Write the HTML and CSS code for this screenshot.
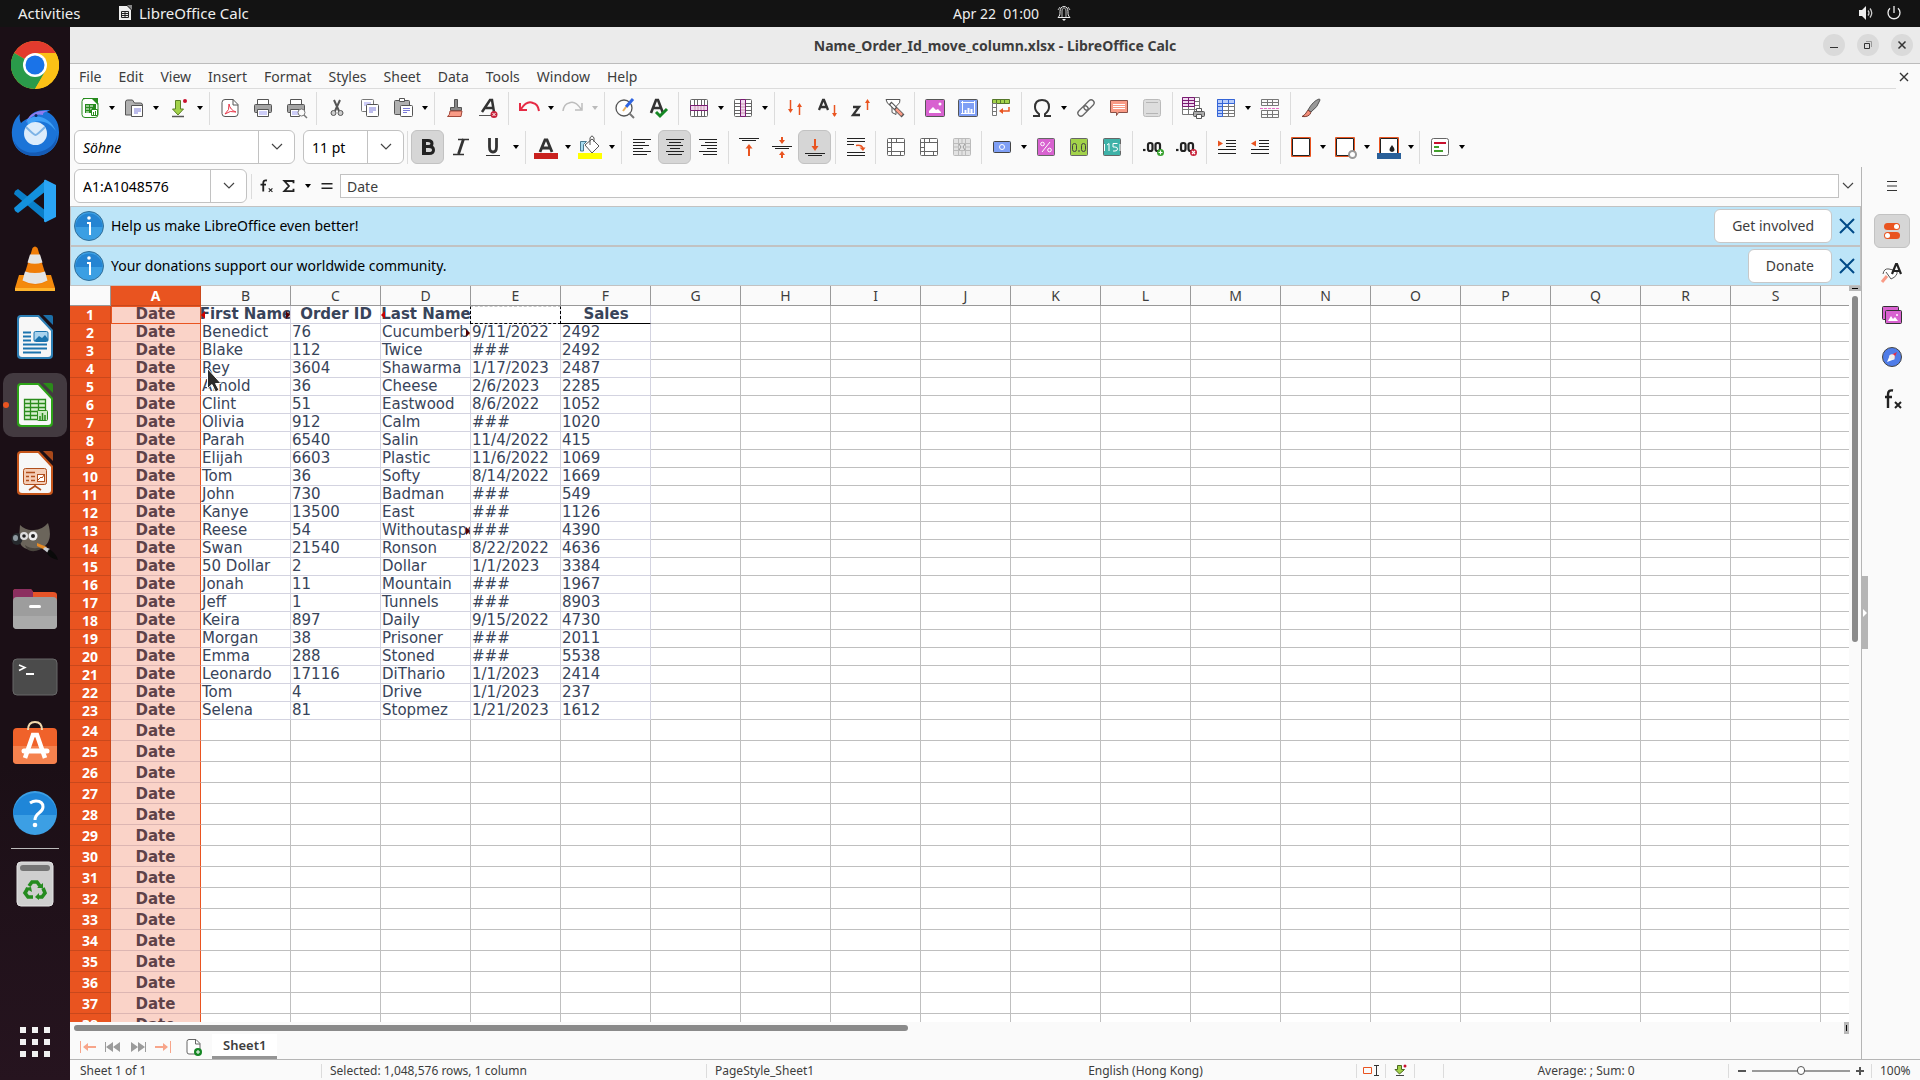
FILE: index.html
```html
<!DOCTYPE html>
<html lang="en">
<head>
    <meta charset="UTF-8">
    <meta name="viewport" content="width=device-width, initial-scale=1.0">
    <title>Name_Order_Id_move_column.xlsx - LibreOffice Calc</title>
    <link rel="stylesheet" href="styles.css">
</head>
<body>
    <header class="topbar">
        <div class="topbar-left">
            <span class="activities">Activities</span>
            <svg width="14" height="16" viewBox="0 0 14 16"><path d="M1 1h8l4 4v10H1z" fill="#eee"/><path d="M9 0h5v5z" fill="#888"/><path d="M3.500 6.500h7v6h-7zM3.500 8.500h7M3.500 10.500h7M7 6.500v6" fill="none" stroke="#222"/></svg>
            <span>LibreOffice Calc</span>
        </div>
        <div class="topbar-clock">
            <span>Apr 22&nbsp; 01:00</span>
            <svg width="14" height="16" viewBox="0 0 14 16" fill="none" stroke="#eee"><path d="M1 12.500h12c-2-2-2-3-2-6 0-3-1.500-5-4-5s-4 2-4 5c0 3 0 4-2 6z"/><path d="M5 12V6c0-2 1-3 2-3s2 1 2 3v6M1 5l2-3M13 5l-2-3" stroke-width=".8"/><path d="M5 14h4l-2 2z" fill="#eee" stroke="none"/></svg>
        </div>
        <div class="topbar-right">
            <svg width="16" height="16" viewBox="0 0 16 16"><path d="M1 5h3l4-4v14l-4-4H1z" fill="#eee"/><path d="M10 5.500q2 2.500 0 5M12 3.500q3.500 4.500 0 9" fill="none" stroke="#ccc" stroke-width="1.300"/></svg>
            <svg width="16" height="16" viewBox="0 0 16 16" fill="none" stroke="#eee" stroke-width="1.300"><path d="M4 3.300a6 6 0 1 0 8 0M8 1v7"/></svg>
        </div>
    </header>

    <div class="desktop">
        <!-- Dock -->
        <nav class="dock">
            <button class="dock-item" aria-label="Google Chrome">
                <svg width="48" height="48" viewBox="0 0 48 48"><circle cx="24" cy="24" r="24" fill="#fbc116"/><path d="M24 24L3.200 12A24 24 0 0 1 44.800 12H24z" fill="#e33b2e"/><path d="M24 24L3.200 12A24 24 0 0 0 24 48L34.500 30z" fill="#2a9b4a"/><path d="M24 12h20.800A24 24 0 0 1 24 48L34.500 30z" fill="#fbc116"/><circle cx="24" cy="24" r="12" fill="#fff"/><circle cx="24" cy="24" r="9.500" fill="#1a73e8"/></svg>
            </button>
            <button class="dock-item" aria-label="Thunderbird">
                <svg width="48" height="48" viewBox="0 0 48 48"><path d="M1 27C0 17 4 9 9 5c-1 4 0 7 1 9 2-2 5-4 8-5C21 3 28 0 40 1.500c-2 0-3 .5-4 1.500 7 3 12 10 12 20 0 14-10 24-24 24S2 38 1 27z" fill="#1b74d8"/><path d="M3 32C8 42 18 45 27 43 37 42 45 34 46 26c1 12-9 21-22 21C13 47 5 41 3 32z" fill="#155bb5"/><path d="M15 14c2-8 10-13 22-12-4 1-5 2-5 4-6-2-13 1-17 8z" fill="#8d7cf0"/><path d="M16 11c9-8 24-2 29 11-5-6-8-8-12-9-7-2-11 0-16 4z" fill="#3fa0f7"/><circle cx="24.500" cy="24.500" r="11.500" fill="#dcecfb"/><path d="M15 18q8 8 9.500 8t9.500-8" fill="none" stroke="#7db3e6" stroke-width="2"/><circle cx="25" cy="6.500" r="1.500" fill="#0c2a60"/></svg>
            </button>
            <button class="dock-item" aria-label="Visual Studio Code">
                <svg width="44" height="44" viewBox="0 0 44 44"><path d="M2 12l3-2 28 22v10L1 15z" fill="#0a7fc9"/><path d="M2 32l3 2 28-22V1L1 29z" fill="#1391dd"/><path d="M33 1l10 5v32l-10 5c-1 .5-2 0-2-1V2c0-1 1-1.500 2-1z" fill="#2aa5f5"/></svg>
            </button>
            <button class="dock-item" aria-label="VLC media player">
                <svg width="42" height="46" viewBox="0 0 42 46"><path d="M5 29h32l4 13v3H1v-3z" fill="#f48a0c"/><path d="M1 42h40v3H1z" fill="#ffb52e"/><path d="M18.500 2q2.500-3 5 0l10 33q-12 8-25 0z" fill="#f07d08"/><path d="M16 8.500h10l2.500 8q-8 2.500-15 0zM11 25.500q10 3 20 0l2.500 9q-12 7-25 0z" fill="#e4e4e4"/></svg>
            </button>
            <button class="dock-item" aria-label="LibreOffice Writer">
                <svg width="38" height="46" viewBox="0 0 38 46"><path d="M5 1h18l14 15v25q0 4-4 4H5q-4 0-4-4V5q0-4 4-4z" fill="#2d7fb5"/><path d="M5 3h17l13 14v23q0 3-3 3H6q-3 0-3-3V6q0-3 2-3z" fill="#f7f7f7"/><path d="M27 1h8q2 0 2 2v8z" fill="#1c6fa8"/><path d="M7 18.500h8M7 22.500h8M7 26.500h8M7 30.500h24M7 34.500h24M7 38.500h18" stroke="#1c74ae" stroke-width="2"/><rect x="18" y="17.500" width="14" height="10" rx="1.500" fill="#a9d3ee" stroke="#1c74ae"/><path d="M18 27l5-5 3 2 3-3 3 4v2z" fill="#1c74ae"/></svg>
            </button>
            <button class="dock-item dock-active" aria-label="LibreOffice Calc">
                <svg width="38" height="46" viewBox="0 0 38 46"><path d="M5 1h18l14 15v25q0 4-4 4H5q-4 0-4-4V5q0-4 4-4z" fill="#2da318"/><path d="M5 3h17l13 14v23q0 3-3 3H6q-3 0-3-3V6q0-3 2-3z" fill="#f7f7f7"/><path d="M27 1h8q2 0 2 2v8z" fill="#2b8a1a"/><path d="M8.500 17.500h21v20h-21z" fill="#d8f0d0"/><path d="M8.500 17.500h21v20h-21zM8.500 21.500h21M8.500 25.500h21M8.500 29.500h21M8.500 33.500h21M14.500 17.500v20M22.500 17.500v20" fill="none" stroke="#2a8c1c" stroke-width="1.300"/><rect x="21.500" y="28.500" width="10" height="10" rx="1" fill="#cdeac4" stroke="#2a8c1c"/><path d="M24 38v-4M26.500 38v-7M29 38v-5" stroke="#2a8c1c" stroke-width="1.500"/></svg>
            </button>
            <button class="dock-item" aria-label="LibreOffice Impress">
                <svg width="38" height="46" viewBox="0 0 38 46"><path d="M5 1h18l14 15v25q0 4-4 4H5q-4 0-4-4V5q0-4 4-4z" fill="#c5551a"/><path d="M5 3h17l13 14v23q0 3-3 3H6q-3 0-3-3V6q0-3 2-3z" fill="#f7f7f7"/><path d="M27 1h8q2 0 2 2v8z" fill="#a8481a"/><rect x="7.500" y="18.500" width="23" height="16" rx="2" fill="#f4cdb6" stroke="#b04e1c"/><path d="M10 22.500h9M10 26.500h3M10 30.500h3M15 26.500h4M15 30.500h4M19 35v2M19 36l-6 4M19 36l6 4" stroke="#b04e1c" stroke-width="1.600"/><rect x="21.500" y="24.500" width="7" height="7" fill="#fff" stroke="#b04e1c"/><path d="M22 30l3-3 1 1 2-3" fill="none" stroke="#b04e1c"/></svg>
            </button>
            <button class="dock-item" aria-label="GIMP">
                <svg width="48" height="42" viewBox="0 0 48 42"><path d="M9 5q6 6 14 5 8 0 14-7 5 16-3 23-8 6-18 3-7-2-8-10z" fill="#6b655b"/><path d="M14 25q8 6 20 1-6 6-14 5-5-1-6-6z" fill="#4a453e"/><ellipse cx="6" cy="19" rx="5.500" ry="6" fill="#26292d"/><ellipse cx="4.500" cy="18" rx="2.500" ry="3" fill="#8d98a0"/><circle cx="13" cy="16" r="4" fill="#ddd"/><circle cx="13" cy="16" r="1.800" fill="#222"/><circle cx="22" cy="16" r="4.500" fill="#eee"/><circle cx="22" cy="16" r="2" fill="#222"/><path d="M26 23l10 4-2 3-8-4z" fill="#e58a26"/><path d="M34 27l5 2-2 4-5-4z" fill="#c9ccd0"/><path d="M38 29q7 4 9 11-9-2-11-7z" fill="#0a0a0a"/></svg>
            </button>
            <button class="dock-item" aria-label="Files">
                <svg width="46" height="42" viewBox="0 0 46 42"><path d="M1 4q0-3 3-3h14q2 0 3 3h20q4 0 4 3v9H1z" fill="#e65428"/><path d="M1 4q0-3 3-3h14q2 0 3 3v12H1z" fill="#8c2f60"/><rect x="1" y="9" width="44" height="32" rx="4" fill="#9d9d9d"/><path d="M1 28h44v9q0 4-4 4H5q-4 0-4-4z" fill="#aaa"/><rect x="17" y="17" width="12" height="3" rx="1.500" fill="#fff"/></svg>
            </button>
            <button class="dock-item" aria-label="Terminal">
                <svg width="46" height="38" viewBox="0 0 46 38"><rect x="1" y="1" width="44" height="36" rx="4" fill="#4b4b4b" stroke="#686868"/><path d="M7 7l6 2.500-6 3" fill="none" stroke="#fff" stroke-width="1.500"/><path d="M14 16h8" stroke="#fff" stroke-width="2"/></svg>
            </button>
            <button class="dock-item" aria-label="Ubuntu Software">
                <svg width="46" height="48" viewBox="0 0 46 48"><rect x="1" y="7" width="44" height="36" rx="4" fill="#f0622a"/><path d="M1 25h44v14q0 4-4 4H5q-4 0-4-4z" fill="#f5824e"/><path d="M16 9q0-8 7-8t7 8" fill="none" stroke="#f3d9ae" stroke-width="2"/><path d="M13 37l8-23h4l8 23" fill="none" stroke="#fff" stroke-width="4.500"/><path d="M12 30h23" stroke="#fff" stroke-width="5" stroke-linecap="round"/></svg>
            </button>
            <button class="dock-item" aria-label="Help">
                <svg width="46" height="46" viewBox="0 0 46 46"><circle cx="23" cy="23" r="22" fill="#3c9fe4"/><path d="M1 25a22 22 0 1 1 44 0z" fill="#1f86d8"/><path d="M18 13q3-2 6-2 7 0 7 6 0 3-4 6-4 3-4 7" fill="none" stroke="#fff" stroke-width="3"/><circle cx="23" cy="35" r="2.300" fill="#fff"/></svg>
            </button>
            <div class="dock-line"></div>
            <button class="dock-item" aria-label="Trash">
                <svg width="38" height="46" viewBox="0 0 38 46"><rect x="1" y="1" width="36" height="44" rx="4" fill="#cfcfcf" stroke="#e4e4e4"/><rect x="4" y="4" width="30" height="6" rx="3" fill="#757575"/><path d="M13 25l3-4h5l3 4M27 27l2 5-3 4h-4M17 36h-5l-3-4 3-5" fill="none" stroke="#258b1f" stroke-width="3.600"/><path d="M21 27h6v-5zM23 32v7l-4-3zM9 27l6-1 1 5z" fill="#258b1f"/></svg>
            </button>
            <button class="dock-apps" aria-label="Show Applications">
                <svg width="30" height="30" viewBox="0 0 30 30" fill="#f2f2f2"><path d="M0 0h6v6H0zM12 0h6v6h-6zM24 0h6v6h-6zM0 12h6v6H0zM12 12h6v6h-6zM24 12h6v6h-6zM0 24h6v6H0zM12 24h6v6h-6zM24 24h6v6h-6z"/></svg>
            </button>
        </nav>

        <main class="window">
            <div class="titlebar">
                <h1 class="title">Name_Order_Id_move_column.xlsx - LibreOffice Calc</h1>
                <div class="window-buttons">
                    <button aria-label="Minimize"><svg width="10" height="10" viewBox="0 0 10 10"><path d="M1 7.500h8" stroke="#333"/></svg></button>
                    <button aria-label="Restore"><svg width="10" height="10" viewBox="0 0 10 10" fill="none" stroke="#333"><path d="M1.500 3.500h5v5h-5z"/><path d="M3 1.500h5.500V7" stroke="#999"/></svg></button>
                    <button aria-label="Close"><svg width="10" height="10" viewBox="0 0 10 10"><path d="M1.500 1.500l7 7M8.500 1.500l-7 7" stroke="#333" stroke-width="1.500"/></svg></button>
                </div>
            </div>

            <div class="menubar">
                <div class="menus">
                    <button>File</button><button>Edit</button><button>View</button><button>Insert</button><button>Format</button><button>Styles</button><button>Sheet</button><button>Data</button><button>Tools</button><button>Window</button><button>Help</button>
                </div>
                <button class="close-doc" aria-label="Close document"><svg width="10" height="10" viewBox="0 0 10 10"><path d="M1 1l8 8M9 1l-8 8" stroke="#333" stroke-width="1.400"/></svg></button>
            </div>

            <!-- Standard toolbar -->
            <div class="toolbar toolbar-standard">
                <button class="tool" aria-label="New"><svg viewBox="0 0 24 24"><path d="M5 2.500h10l5 5v11q0 3-3 3H7q-3 0-3-3v-13q0-3 3-3z" fill="#fff" stroke="#268b1d"/><path d="M13 2h7v7z" fill="#268b1d"/><path d="M7 8h11v9H7z" fill="#268b1d"/><path d="M8 10h3M12 10h3M8 13h3M12 13h2M8 16h3" stroke="#fff"/><path d="M13.500 13.500h6v6h-6z" fill="#fff" stroke="#268b1d"/><path d="M15.500 19v-3M17.500 19v-4" stroke="#268b1d"/></svg></button><button class="drop" aria-label="New options"></button>
                <button class="tool" aria-label="Open"><svg viewBox="0 0 24 24"><path d="M3.500 19V6q0-2 2-2h5l2 3h6q2 0 2 2v10z" fill="#b0b0b0" stroke="#555"/><path d="M9.500 9.500h11v11h-11z" fill="#fff" stroke="#555"/><path d="M12 13h7M12 15h7M12 17h4" stroke="#7a7ad8"/></svg></button><button class="drop" aria-label="Open options"></button>
                <button class="tool" aria-label="Save"><svg viewBox="0 0 24 24"><path d="M9.500 4.500h5V13h3l-5.500 6L6.500 13h3z" fill="#a2d24a" stroke="#5b7f24"/><path d="M6 20.500h12" stroke="#555" stroke-width="1.500"/><circle cx="19" cy="5" r="2" fill="#c8102e"/></svg></button><button class="drop" aria-label="Save options"></button>
                <i class="sep"></i>
                <button class="tool" aria-label="Export as PDF"><svg viewBox="0 0 24 24"><path d="M7 3.500h8l5 5v9q0 3-3 3H7q-3 0-3-3v-11q0-3 3-3z" fill="#fff" stroke="#555"/><path d="M15 3v6h5" fill="none" stroke="#555"/><path d="M11 8q1 6 7 8-6-2-11 2 5-4 4-10z" fill="none" stroke="#e8374a"/></svg></button>
                <button class="tool" aria-label="Print"><svg viewBox="0 0 24 24"><path d="M6.500 3.500h11v5h-11z" fill="#fff" stroke="#555"/><rect x="3.500" y="8.500" width="17" height="8" rx="1" fill="#a5a5a5" stroke="#555"/><path d="M6.500 13.500h11v7h-11z" fill="#fff" stroke="#555"/><path d="M8 16h8M8 18h8" stroke="#9c9cf0"/></svg></button>
                <button class="tool" aria-label="Print preview"><svg viewBox="0 0 24 24"><path d="M6.500 3.500h11v5h-11z" fill="#fff" stroke="#555"/><rect x="3.500" y="8.500" width="17" height="8" rx="1" fill="#a5a5a5" stroke="#555"/><path d="M6.500 13.500h9v7h-9z" fill="#fff" stroke="#555"/><path d="M8 16h6M8 18h6" stroke="#9c9cf0"/><circle cx="17.500" cy="16.500" r="3.500" fill="#fafafa" stroke="#777"/><path d="M20 19l3 3" stroke="#777" stroke-width="1.500"/></svg></button>
                <i class="sep"></i>
                <button class="tool" aria-label="Cut"><svg viewBox="0 0 24 24" fill="none" stroke="#555"><path d="M9 4l5 11M15 4l-5 11" stroke-width="2"/><circle cx="8.500" cy="17" r="2.500" fill="#ccc"/><circle cx="15.500" cy="17" r="2.500" fill="#ccc"/></svg></button>
                <button class="tool" aria-label="Copy"><svg viewBox="0 0 24 24" fill="#fff" stroke="#777"><rect x="3.500" y="3.500" width="12" height="12" rx="1"/><path d="M6 7h7M6 9h7" stroke="#9c9cf0"/><rect x="8.500" y="8.500" width="12" height="12" rx="1" stroke="#555"/><path d="M11 12h7M11 14h7M11 16h4" stroke="#7a7ad8"/></svg></button>
                <button class="tool" aria-label="Paste"><svg viewBox="0 0 24 24"><rect x="3.500" y="4.500" width="15" height="14" rx="1" fill="#b0b0b0" stroke="#555"/><path d="M8.500 2.500h5v3h-5z" fill="#fff" stroke="#555"/><rect x="9.500" y="9.500" width="12" height="11" rx="1" fill="#fff" stroke="#555"/><path d="M12 12.500h7M12 14.500h7M12 16.500h4" stroke="#7a7ad8"/></svg></button><button class="drop" aria-label="Paste options"></button>
                <i class="sep"></i>
                <button class="tool" aria-label="Clone formatting"><svg viewBox="0 0 24 24"><path d="M11.500 3.500h3v8h4v3h-11v-3h4z" fill="#888" stroke="#555"/><path d="M7 15h12l-1 5.500H4.500Q7 19 7 15z" fill="#f99b86" stroke="#a3483a"/></svg></button>
                <button class="tool" aria-label="Clear formatting"><svg viewBox="0 0 24 24"><path d="M6 16l8-12h2l2 12M9 12h8" fill="none" stroke="#333" stroke-width="2.500"/><path d="M3 19.500h12" stroke="#555"/><circle cx="18" cy="18.500" r="3.500" fill="#c8243c"/><path d="M16.500 17l3 3M19.500 17l-3 3" stroke="#fff"/></svg></button>
                <i class="sep"></i>
                <button class="tool" aria-label="Undo"><svg viewBox="0 0 24 24" fill="none" stroke="#e62a44" stroke-width="2"><path d="M3 7v7h7M4 13q6-9 12-6 5 1 6 8"/></svg></button><button class="drop" aria-label="Undo list"></button>
                <button class="tool" aria-label="Redo"><svg viewBox="0 0 24 24" fill="none" stroke="#bdbdbd" stroke-width="1.500"><path d="M21 7v7h-7M20 13q-6-9-12-6-5 1-6 8"/></svg></button><button class="drop drop-off" aria-label="Redo list"></button>
                <i class="sep"></i>
                <button class="tool" aria-label="Find and replace"><svg viewBox="0 0 24 24"><circle cx="11" cy="12" r="8" fill="#fff" stroke="#555" stroke-width="1.300"/><path d="M16 17l5 5" stroke="#777" stroke-width="2"/><path d="M13 11l7-8" stroke="#2f64e0" stroke-width="3"/><path d="M10 15l3-4" stroke="#e8b060" stroke-width="2"/></svg></button>
                <button class="tool" aria-label="Spelling"><svg viewBox="0 0 24 24" fill="none"><path d="M5 17l5-13h2l5 13M7 12h8" stroke="#333" stroke-width="2.600"/><path d="M10 16l4 4 7-7" stroke="#158724" stroke-width="3"/></svg></button>
                <i class="sep"></i>
                <button class="tool" aria-label="Row"><svg viewBox="0 0 24 24" fill="none" stroke="#666"><rect x="3.500" y="3.500" width="17" height="17" rx="1" fill="#fff"/><path d="M7.500 4v16M10.500 4v16M14.500 4v16M17.500 4v16"/><path d="M3.500 9.500h17v5h-17z" fill="#f0d8f0" stroke="#7a1b72"/><path d="M8 10v4M11 10v4M14 10v4M17 10v4" stroke="#c9a"/></svg></button><button class="drop" aria-label="Row options"></button>
                <button class="tool" aria-label="Column"><svg viewBox="0 0 24 24" fill="none" stroke="#666"><rect x="3.500" y="3.500" width="17" height="17" rx="1" fill="#fff"/><path d="M4 7.500h16M4 10.500h16M4 14.500h16M4 17.500h16"/><path d="M9.500 3.500h5v17h-5z" fill="#f0d8f0" stroke="#7a1b72"/><path d="M10 8h4M10 11h4M10 14h4M10 17h4" stroke="#c9a"/></svg></button><button class="drop" aria-label="Column options"></button>
                <i class="sep"></i>
                <button class="tool" aria-label="Sort"><svg viewBox="0 0 24 24" fill="none" stroke="#e95420"><path d="M7.500 4v11M16.500 9v10" stroke-width="1.500"/><path d="M5 13l2.500 4 2.500-4zM14 11l2.500-4 2.500 4z" fill="#e95420" stroke="none"/></svg></button>
                <button class="tool" aria-label="Sort ascending"><svg viewBox="0 0 24 24" fill="none"><path d="M3 14L7 4h1l4 10M4 11h7" stroke="#333" stroke-width="2.300"/><path d="M18.500 9v11" stroke="#e95420" stroke-width="1.500"/><path d="M16 17l2.500 4 2.500-4z" fill="#e95420"/></svg></button>
                <button class="tool" aria-label="Sort descending"><svg viewBox="0 0 24 24" fill="none"><path d="M4 11h6l-6 8h7" stroke="#333" stroke-width="2.300"/><path d="M18.500 5v9" stroke="#e95420" stroke-width="1.500"/><path d="M16 7l2.500-4 2.500 4z" fill="#e95420"/></svg></button>
                <button class="tool" aria-label="AutoFilter"><svg viewBox="0 0 24 24"><path d="M4 3.500h14q1 3-4 7v8l-4-2v-6q-6-3-6-7z" fill="#fff" stroke="#555"/><path d="M8 7l13 13" stroke="#555" stroke-width="4"/><path d="M9 8l4 4" stroke="#fff" stroke-width="2"/><path d="M14 13l6 6" stroke="#f99b86" stroke-width="2.500"/></svg></button>
                <i class="sep"></i>
                <button class="tool" aria-label="Insert image"><svg viewBox="0 0 24 24"><rect x="2.500" y="3.500" width="19" height="17" rx="1" fill="#d862d0" stroke="#555"/><path d="M6 17v-2l4-4 3 3 2-1 3 3v1z" fill="#fff"/><circle cx="17" cy="8" r="1.500" fill="#fff"/></svg></button>
                <button class="tool" aria-label="Insert chart"><svg viewBox="0 0 24 24"><rect x="2.500" y="3.500" width="19" height="17" rx="1" fill="#7f9ff5" stroke="#555"/><path d="M6.500 5v13M5 17.500h14M5 6.500h14M18.500 5v13" stroke="#fff"/><path d="M9.500 17v-3M12.500 17v-5M15.500 17v-4" stroke="#fff" stroke-width="2"/></svg></button>
                <button class="tool" aria-label="Pivot table"><svg viewBox="0 0 24 24"><path d="M3.500 3.500h17v4h-17z" fill="#a2d24a" stroke="#55762a"/><path d="M7.500 4v3M11.500 4v3M15.500 4v3" stroke="#55762a"/><path d="M3.500 7.500h4v12h-4zM4 11.500h3M4 15.500h3" fill="#fff" stroke="#777"/><path d="M20 11v4h-7" fill="none" stroke="#e95420" stroke-width="1.500"/><path d="M14 12l-4 3 4 3z" fill="#e95420"/></svg></button>
                <i class="sep"></i>
                <button class="tool" aria-label="Special character"><svg viewBox="0 0 24 24"><path d="M3 20h6v-2q-4-3-4-7 0-7 7-7t7 7q0 4-4 7v2h6" fill="none" stroke="#333" stroke-width="2"/></svg></button><button class="drop" aria-label="Character list"></button>
                <button class="tool" aria-label="Hyperlink"><svg viewBox="0 0 24 24" fill="none" stroke="#666" stroke-width="1.300"><rect x="3" y="12" width="12" height="6" rx="3" transform="rotate(-45 9 15)"/><rect x="9" y="6" width="12" height="6" rx="3" transform="rotate(-45 15 9)"/></svg></button>
                <button class="tool" aria-label="Comment"><svg viewBox="0 0 24 24"><path d="M3.500 4.500h17v12h-9l-2 3v-3h-6z" fill="#f99b86" stroke="#8a5046"/><path d="M6 8.500h12M6 10.500h12M6 12.500h12" stroke="#fff"/></svg></button>
                <button class="tool" aria-label="Headers and footers"><svg viewBox="0 0 24 24"><rect x="3.500" y="3.500" width="17" height="17" rx="2" fill="#ddd" stroke="#bbb"/><path d="M6 6.500h12M6 17.500h12" stroke="#b5b5b5"/></svg></button>
                <i class="sep"></i>
                <button class="tool" aria-label="Print area"><svg viewBox="0 0 24 24"><path d="M1.500 1.500h17v17h-17zM2 5.500h16M2 9.500h16M2 13.500h16M7.500 2v16M13.500 2v16" fill="#fff" stroke="#777"/><path d="M1.500 1.500h12v9h-12zM2 4.500h11M2 7.500h11M7.500 2v8" fill="#f0d8f0" stroke="#7a1b72"/><rect x="12.500" y="15.500" width="11" height="5" rx="1" fill="#aaa" stroke="#555"/><path d="M15.500 12.500h5v3h-5zM15.500 18.500h5v4h-5z" fill="#fff" stroke="#555"/></svg></button>
                <button class="tool" aria-label="Freeze rows and columns"><svg viewBox="0 0 24 24" fill="none"><path d="M3.500 3.500h17v17h-17z" fill="#fff" stroke="#777"/><path d="M9 10.500h11M9 14.500h11M9 17.500h11M14.500 8v12" stroke="#777"/><path d="M3.500 3.500h17v4h-12v13h-5z" fill="#b9cdfa" stroke="#3565d8"/><path d="M4 7.500h5M4 10.500h5M4 14.500h5M4 17.500h5M8.500 4v4M14.500 4v4" stroke="#3565d8"/></svg></button><button class="drop" aria-label="Freeze options"></button>
                <button class="tool" aria-label="Split window"><svg viewBox="0 0 24 24" fill="none" stroke="#777"><path d="M3.500 3.500h17v6h-17zM4 6.500h16M9.500 4v5M14.500 4v5M3.500 14.500h17v7h-17zM4 18.500h16M9.500 15v6M14.500 15v6"/><path d="M2 12.500h20" stroke="#e870c8" stroke-dasharray="3 1"/></svg></button>
                <i class="sep"></i>
                <button class="tool" aria-label="Show draw functions"><svg viewBox="0 0 24 24"><path d="M9 14Q14 5 20 3q1 0 1 1-2 7-9 12z" fill="#999" stroke="#555"/><path d="M9 14l3 2.500q-2 5-9 4 3-1 6-6.500z" fill="#f58d78" stroke="#7c4036"/></svg></button>
            </div>

            <!-- Formatting toolbar -->
            <div class="toolbar">
                <div class="combo combo-font"><input type="text" value="Söhne" aria-label="Font name"><button aria-label="Font list"><svg width="12" height="8" viewBox="0 0 12 8"><path d="M1 1l5 5 5-5" fill="none" stroke="#444" stroke-width="1.200"/></svg></button></div>
                <div class="combo combo-size"><input type="text" value="11 pt" aria-label="Font size"><button aria-label="Size list"><svg width="12" height="8" viewBox="0 0 12 8"><path d="M1 1l5 5 5-5" fill="none" stroke="#444" stroke-width="1.200"/></svg></button></div>
                <i class="sep sep-tight"></i>
                <button class="tool tool-on" aria-label="Bold"><svg viewBox="0 0 24 24"><path d="M6.500 5.500H12q4 0 4 3t-4 3H7h6q4.500 0 4.500 3.500t-4.500 3.500H6.500" fill="none" stroke="#222" stroke-width="3"/><path d="M8 4v16" stroke="#222" stroke-width="4"/></svg></button>
                <button class="tool" aria-label="Italic"><svg viewBox="0 0 24 24" fill="none" stroke="#333"><path d="M9 4.500h11M4 19.500h11" stroke-width="1.500"/><path d="M14.500 4l-5 15" stroke-width="2.800"/></svg></button>
                <button class="tool" aria-label="Underline"><svg viewBox="0 0 24 24" fill="none" stroke="#333"><path d="M7.500 3v9q0 5 3.500 5t3.500-5V3" stroke-width="2.800"/><path d="M4 20.500h14"/></svg></button><button class="drop" aria-label="Underline styles"></button>
                <i class="sep"></i>
                <button class="tool" aria-label="Font color"><svg viewBox="0 0 24 24"><path d="M6 17l5-12h2l5 12M8 13h8" fill="none" stroke="#333" stroke-width="2.800"/><path d="M0 18h24v6H0z" fill="#c9211e"/></svg></button><button class="drop" aria-label="Font colors"></button>
                <button class="tool" aria-label="Background color"><svg viewBox="0 0 24 24"><path d="M2.500 16V6.500h6l-3 3v6.500z" fill="#a8dcf0" stroke="#4a7a90"/><path d="M14 4l7 7-7 7-7-8z" fill="#fff" stroke="#555"/><path d="M12 10V3q2-4 4 0v4" fill="none" stroke="#555"/><path d="M0 18h24v6H0z" fill="#ff0"/></svg></button><button class="drop" aria-label="Background colors"></button>
                <i class="sep"></i>
                <button class="tool" aria-label="Align left"><svg viewBox="0 0 24 24"><path d="M3 4.500h18M3 7.500h12M3 10.500h16M3 13.500h10M3 16.500h18M3 19.500h14" stroke="#222"/></svg></button>
                <button class="tool tool-on" aria-label="Center"><svg viewBox="0 0 24 24"><path d="M3 4.500h18M6 7.500h12M4 10.500h16M7 13.500h10M3 16.500h18M5 19.500h14" stroke="#222"/></svg></button>
                <button class="tool" aria-label="Align right"><svg viewBox="0 0 24 24"><path d="M3 4.500h18M9 7.500h12M5 10.500h16M11 13.500h10M3 16.500h18M7 19.500h14" stroke="#222"/></svg></button>
                <i class="sep"></i>
                <button class="tool" aria-label="Align top"><svg viewBox="0 0 24 24"><path d="M2 3.500h20M5 5.500h14" stroke="#222"/><path d="M12 12v9" stroke="#e95420" stroke-width="2"/><path d="M8.500 13.500L12 9l3.500 4.500z" fill="#e95420"/></svg></button>
                <button class="tool" aria-label="Center vertically"><svg viewBox="0 0 24 24"><path d="M2 11.500h20M5 13.500h14" stroke="#222"/><path d="M12 2v5M12 18v5" stroke="#e95420" stroke-width="2"/><path d="M9 5l3 4 3-4zM9 20l3-4 3 4z" fill="#e95420"/></svg></button>
                <button class="tool tool-on" aria-label="Align bottom"><svg viewBox="0 0 24 24"><path d="M2 18.500h20M5 20.500h14" stroke="#222"/><path d="M12 4v8" stroke="#e95420" stroke-width="2"/><path d="M8.500 11l3.500 5 3.500-5z" fill="#e95420"/></svg></button>
                <i class="sep"></i>
                <button class="tool" aria-label="Wrap text"><svg viewBox="0 0 24 24" fill="none"><path d="M3 3.500h18M3 6.500h18M3 9.500h7M3 17.500h18M3 20.500h18" stroke="#222"/><path d="M12 10.500q7-1 7 4" stroke="#e95420" stroke-width="1.500"/><path d="M15.500 12.500h6L19 16z" fill="#e95420"/></svg></button>
                <i class="sep sep-tight"></i>
                <button class="tool" aria-label="Merge and center cells"><svg viewBox="0 0 24 24" fill="#fff" stroke="#666"><rect x="3.500" y="3.500" width="17" height="17" rx="1"/><path d="M4 7.500h16M4 16.500h16M7.500 4v16M12.500 4v3M16.500 17v3M4 12.500h3"/></svg></button>
                <button class="tool" aria-label="Merge cells"><svg viewBox="0 0 24 24" fill="#fff" stroke="#666"><rect x="3.500" y="3.500" width="17" height="17" rx="1"/><path d="M4 7.500h16M4 16.500h16M7.500 4v16M12.500 4v3M16.500 17v3M4 12.500h3"/></svg></button>
                <button class="tool" aria-label="Unmerge cells"><svg viewBox="0 0 24 24" fill="#e2e2e2" stroke="#bbb"><rect x="3.500" y="3.500" width="17" height="17" rx="1"/><path d="M4 8.500h16M4 15.500h16M8.500 4v16M15.500 4v16M12 4v4M12 16v4M4 12h4M16 12h4"/><path d="M9 9l2 3-2 3M15 9l-2 3 2 3" fill="none" stroke="#999"/></svg></button>
                <i class="sep sep-tight"></i>
                <button class="tool" aria-label="Format as currency"><svg viewBox="0 0 24 24"><rect x="3.500" y="6.500" width="17" height="11" rx="1" fill="#7f9ff5" stroke="#444"/><circle cx="12" cy="12" r="2.500" fill="none" stroke="#fff"/></svg></button><button class="drop" aria-label="Currency list"></button>
                <button class="tool" aria-label="Format as percent"><svg viewBox="0 0 24 24"><rect x="3.500" y="3.500" width="17" height="17" rx="1" fill="#d862d0" stroke="#666"/><path d="M8 17l8-10" stroke="#fff"/><circle cx="8.500" cy="9" r="1.800" fill="none" stroke="#fff"/><circle cx="15.500" cy="15" r="1.800" fill="none" stroke="#fff"/></svg></button>
                <button class="tool" aria-label="Format as number"><svg viewBox="0 0 24 24" fill="none"><rect x="3.500" y="3.500" width="17" height="17" rx="1" fill="#a2d24a" stroke="#666"/><rect x="5.500" y="8.500" width="4" height="8" rx="2" stroke="#444"/><rect x="14.500" y="8.500" width="4" height="8" rx="2" stroke="#444"/><path d="M12 15v2" stroke="#444"/></svg></button>
                <button class="tool" aria-label="Format as date"><svg viewBox="0 0 24 24" fill="none"><rect x="3.500" y="3.500" width="17" height="17" rx="1" fill="#3fb2a8" stroke="#666"/><path d="M4.500 9v7M7 10l2-1.500V16M17.500 8.500H13v3.500h2q2.500 0 2.500 2t-2.500 2h-2M20 9v7" stroke="#fff"/></svg></button>
                <i class="sep"></i>
                <button class="tool" aria-label="Add decimal place"><svg viewBox="0 0 24 24" fill="none" stroke="#222" stroke-width="2.200"><path d="M2 15h2.500" /><rect x="7" y="8" width="4.500" height="8" rx="2"/><rect x="14.500" y="8" width="4.500" height="8" rx="2"/><circle cx="19.500" cy="17.500" r="3.500" fill="#35a02c" stroke="none"/><path d="M17.500 17.500h4M19.500 15.500v4" stroke="#fff" stroke-width="1.200"/></svg></button>
                <button class="tool" aria-label="Delete decimal place"><svg viewBox="0 0 24 24" fill="none" stroke="#222" stroke-width="2.200"><path d="M2 15h2.500" /><rect x="7" y="8" width="4.500" height="8" rx="2"/><rect x="14.500" y="8" width="4.500" height="8" rx="2"/><circle cx="19.500" cy="17.500" r="3.500" fill="#c8243c" stroke="none"/><path d="M18 16l3 3M21 16l-3 3" stroke="#fff" stroke-width="1.200"/></svg></button>
                <i class="sep"></i>
                <button class="tool" aria-label="Increase indent"><svg viewBox="0 0 24 24"><path d="M11 5.500h10M11 8.500h10M11 11.500h10M3 14.500h18M3 18.500h18" stroke="#222"/><path d="M3 5.500v6L8 8.500z" fill="#e95420"/></svg></button>
                <button class="tool" aria-label="Decrease indent"><svg viewBox="0 0 24 24"><path d="M11 5.500h10M11 8.500h10M11 11.500h10M3 14.500h18M3 18.500h18" stroke="#222"/><path d="M8 5.500v6L3 8.500z" fill="#e95420"/></svg></button>
                <i class="sep"></i>
                <button class="tool" aria-label="Borders"><svg viewBox="0 0 24 24"><path d="M2.500 2.500h19v19h-19z" fill="#fff" stroke="#e95420"/><path d="M3.500 3.500h17v17h-17z" fill="none" stroke="#222"/></svg></button><button class="drop" aria-label="Border list"></button>
                <button class="tool" aria-label="Border style"><svg viewBox="0 0 24 24"><path d="M2.500 2.500h19v19h-19z" fill="#fff" stroke="#e95420"/><path d="M3.500 3.500h17v17h-17z" fill="none" stroke="#222"/><circle cx="19.500" cy="19.500" r="3.500" fill="#fff" stroke="#999" stroke-width="2"/></svg></button><button class="drop" aria-label="Border styles"></button>
                <button class="tool" aria-label="Border color"><svg viewBox="0 0 24 24"><path d="M2.500 18V2.500h19V18" fill="#fff" stroke="#e95420"/><path d="M3.500 18V3.500h17V18" fill="none" stroke="#222"/><path d="M15 10q5 6 0 7-5-1 0-7z" fill="#222"/><path d="M0 18h24v6H0z" fill="#2a6099"/></svg></button><button class="drop" aria-label="Border colors"></button>
                <i class="sep sep-tight"></i>
                <button class="tool" aria-label="Conditional formatting"><svg viewBox="0 0 24 24"><rect x="3.500" y="3.500" width="17" height="17" rx="2" fill="#fff" stroke="#666"/><path d="M6 8h12" stroke="#c8102e" stroke-width="2"/><path d="M6 12h5M6 16h9" stroke="#43a02c" stroke-width="2"/></svg></button><button class="drop" aria-label="Conditional options"></button>
            </div>

            <div class="workspace">
                <div class="sheet-area">
                    <!-- Formula bar -->
                    <div class="formula-bar">
                        <div class="combo combo-name"><input type="text" value="A1:A1048576" aria-label="Name box"><button aria-label="Range list"><svg width="12" height="8" viewBox="0 0 12 8"><path d="M1 1l5 5 5-5" fill="none" stroke="#444" stroke-width="1.200"/></svg></button></div>
                        <i class="sep"></i>
                        <button class="fx" aria-label="Function wizard"><svg viewBox="0 0 24 24" fill="none" stroke="#222"><path d="M13 6q-4-1-4 3v9M6 10.500h6" stroke-width="2"/><path d="M15 14.500l4 4M19 14.500l-4 4" stroke-width="1.200"/></svg></button>
                        <button class="fx" aria-label="Select function"><svg viewBox="0 0 24 24" fill="none" stroke="#222" stroke-width="2"><path d="M18 9V6.500H8l5 5.500-5 5.500h10V15"/></svg></button><button class="drop" aria-label="Function list"></button>
                        <button class="fx" aria-label="Formula"><svg viewBox="0 0 24 24" stroke="#222" stroke-width="1.600"><path d="M6 9.500h12M6 14.500h12"/></svg></button>
                        <input class="formula" type="text" value="Date" aria-label="Input line">
                        <button class="expand" aria-label="Expand formula bar"><svg width="12" height="8" viewBox="0 0 12 8"><path d="M1 1l5 5 5-5" fill="none" stroke="#444" stroke-width="1.200"/></svg></button>
                    </div>

                    <div class="infobar">
                        <svg width="30" height="30" viewBox="0 0 30 30"><circle cx="15" cy="15" r="14.500" fill="#3b9fe3" stroke="#336f99"/><path d="M1.500 16a13.500 13.500 0 0 1 27 0z" fill="#2484d2"/><circle cx="15" cy="7" r="1.800" fill="#fff"/><path d="M13 12h3v12" fill="none" stroke="#fff" stroke-width="2"/></svg>
                        <p>Help us make LibreOffice even better!</p>
                        <button class="btn">Get involved</button>
                        <button class="btn-close" aria-label="Close infobar"><svg width="16" height="16" viewBox="0 0 16 16"><path d="M1 1l14 14M15 1L1 15" stroke="#004a88" stroke-width="2"/></svg></button>
                    </div>
                    <div class="infobar">
                        <svg width="30" height="30" viewBox="0 0 30 30"><circle cx="15" cy="15" r="14.500" fill="#3b9fe3" stroke="#336f99"/><path d="M1.500 16a13.500 13.500 0 0 1 27 0z" fill="#2484d2"/><circle cx="15" cy="7" r="1.800" fill="#fff"/><path d="M13 12h3v12" fill="none" stroke="#fff" stroke-width="2"/></svg>
                        <p>Your donations support our worldwide community.</p>
                        <button class="btn">Donate</button>
                        <button class="btn-close" aria-label="Close infobar"><svg width="16" height="16" viewBox="0 0 16 16"><path d="M1 1l14 14M15 1L1 15" stroke="#004a88" stroke-width="2"/></svg></button>
                    </div>

                    <div class="grid-row">
                        <div class="grid">
                            <table class="table">
                                <thead><tr id="columnHeads"></tr></thead>
                                <tbody id="sheetBody"></tbody>
                            </table>
                        </div>
                        <div class="vscroll">
                            <div class="vsplit"></div>
                            <div class="vthumb"></div>
                        </div>
                    </div>
                    <div class="hscroll">
                        <div class="hthumb"></div>
                        <div class="hsplit"></div>
                    </div>

                    <div class="tabs">
                        <button aria-label="First sheet"><svg width="16" height="16" viewBox="0 0 16 16" fill="none" stroke="#f7a58a"><path d="M.5 2v12" /><path d="M4 8h12" stroke-width="2"/><path d="M3 8l5-4v8z" fill="#f7a58a" stroke="none"/></svg></button>
                        <button aria-label="Previous sheet"><svg width="16" height="16" viewBox="0 0 16 16" fill="#9b9b9b"><path d="M0 3h1v10H0zM1 8l7-5v10zM8 8l7-5v10z"/></svg></button>
                        <button aria-label="Next sheet"><svg width="16" height="16" viewBox="0 0 16 16" fill="#9b9b9b"><path d="M15 3h1v10h-1zM15 8L8 3v10zM8 8L1 3v10z"/></svg></button>
                        <button aria-label="Last sheet"><svg width="16" height="16" viewBox="0 0 16 16" fill="none" stroke="#f7a58a"><path d="M15.500 2v12"/><path d="M0 8h12" stroke-width="2"/><path d="M13 8L8 4v8z" fill="#f7a58a" stroke="none"/></svg></button>
                        <button class="add-sheet" aria-label="Add sheet"><svg width="16" height="18" viewBox="0 0 16 18"><path d="M3 1.500h7l4 4V14q0 2-2 2H3q-2 0-2-2V3.500q0-2 2-2z" fill="#fff" stroke="#666"/><path d="M9.500 1.500V6H14" fill="none" stroke="#666"/><circle cx="12" cy="14" r="4" fill="#158724"/><path d="M10 14h4M12 12v4" stroke="#fff"/></svg></button>
                        <button class="tab">Sheet1</button>
                    </div>
                </div>

                <aside class="sidebar">
                    <button class="side-menu" aria-label="Sidebar settings"><svg viewBox="0 0 24 24"><path d="M7 7.500h10M7 12h10M7 16.500h10" stroke="#333"/></svg></button>
                    <button class="side-on" aria-label="Properties"><svg viewBox="0 0 24 24"><rect x="4" y="4" width="16" height="7" rx="3.500" fill="#e95420"/><circle cx="16.500" cy="7.500" r="2.500" fill="#fff"/><rect x="4" y="13" width="16" height="7" rx="3.500" fill="#e95420"/><circle cx="7.500" cy="16.500" r="2.500" fill="#fff"/></svg></button>
                    <button aria-label="Styles"><svg viewBox="0 0 24 24"><path d="M2 21l5-6" stroke="#f99b86" stroke-width="3"/><path d="M3 13q1-6 6-5l8 2q1 5-6 8l-5-7" fill="#fff" stroke="#555"/><path d="M12 13l4-10h1l4 10M13.500 10h7" fill="none" stroke="#222" stroke-width="2.200"/></svg></button>
                    <button aria-label="Gallery"><svg viewBox="0 0 24 24"><rect x="2.500" y="3.500" width="16" height="13" rx="1" fill="#d862d0" stroke="#333"/><rect x="5.500" y="7.500" width="16" height="13" rx="1" fill="#d862d0" stroke="#333"/><path d="M8 18l3-5 2 3 2-2 3 4z" fill="#fff"/><circle cx="17" cy="12" r="1" fill="#fff"/></svg></button>
                    <button aria-label="Navigator"><svg viewBox="0 0 24 24"><circle cx="12" cy="12" r="9.500" fill="#4f7ce8" stroke="#444"/><path d="M7 17l3-7 5 4z" fill="#fff"/><path d="M17 7l-6 3 3 4z" fill="#e62a44"/><circle cx="12" cy="12" r="2.800" fill="#eee"/></svg></button>
                    <button aria-label="Functions"><svg viewBox="0 0 24 24" fill="none" stroke="#222"><path d="M13 3.500q-5-1-5 4V21M5 10h7" stroke-width="2.400"/><path d="M15 15l6 6M21 15l-6 6" stroke-width="2"/></svg></button>
                    <div class="side-handle"></div>
                </aside>
            </div>

            <footer class="statusbar">
                <span class="st-sheet">Sheet 1 of 1</span>
                <span class="st-selected">Selected: 1,048,576 rows, 1 column</span>
                <span class="st-style">PageStyle_Sheet1</span>
                <span class="st-lang">English (Hong Kong)</span>
                <span class="st-icon"><svg width="18" height="14" viewBox="0 0 18 14" fill="none"><path d="M1.500 3.500h8v6h-8z" stroke="#e95420"/><path d="M12 1.500h5M12 11.500h5M14.500 2v10" stroke="#333"/></svg></span>
                <span class="st-icon"><svg width="14" height="14" viewBox="0 0 14 14"><path d="M4.500 1.500h4v4h3L6.500 10l-4.500-4.500h2.500z" fill="#a2d24a" stroke="#4c6a20"/><path d="M3 11.500h8" stroke="#444"/><circle cx="12" cy="2" r="1.500" fill="#c8102e"/></svg></span>
                <span class="st-icon"></span>
                <span class="st-sum">Average: ; Sum: 0</span>
                <span class="st-zoom">
                    <button aria-label="Zoom out"><svg width="10" height="10" viewBox="0 0 10 10"><path d="M1 5h8" stroke="#555" stroke-width="2"/></svg></button>
                    <input type="range" min="0" max="100" value="50" aria-label="Zoom">
                    <button aria-label="Zoom in"><svg width="10" height="10" viewBox="0 0 10 10"><path d="M1 5h8M5 1v8" stroke="#555" stroke-width="2"/></svg></button>
                </span>
                <span class="st-percent">100%</span>
            </footer>
        </main>
    </div>

    <svg class="pointer" width="16" height="26" viewBox="0 0 16 26"><path d="M1.500 1.500v20l4.500-4 3.500 7.500 3.500-2-3.500-6.500h5.500z" fill="#2b2b2b" stroke="#fff"/></svg>

    <script src="script.js"></script>
</body>
</html>
```

FILE: styles.css
```css
* {
    box-sizing: border-box;
    margin: 0;
    padding: 0;
}

body {
    font-family: 'Noto Sans', 'Open Sans', sans-serif;
    font-size: 14px;
    color: #3d3d3d;
    height: 100vh;
    display: flex;
    flex-direction: column;
    overflow: hidden;
    background-color: #1b0f16;
}

button,
input {
    font: inherit;
    color: inherit;
    border: none;
    background: none;
}

svg {
    display: block;
    flex: none;
}

/* top panel */
.topbar {
    height: 27px;
    flex: none;
    display: flex;
    align-items: center;
    background-color: #131313;
    color: #eee;
    padding: 0 18px 1px;
}

.topbar-left,
.topbar-right {
    flex: 1;
    display: flex;
    align-items: center;
    gap: 7px;
}

.topbar-left {
    font-size: 15px;
}

.topbar-right {
    justify-content: flex-end;
    gap: 12px;
}

.activities {
    width: 93px;
}

.topbar-clock {
    display: flex;
    align-items: center;
    gap: 18px;
    padding-left: 104px;
}

.desktop {
    flex: 1;
    min-height: 0;
    display: flex;
}

/* dock */
.dock {
    width: 70px;
    flex: none;
    display: flex;
    flex-direction: column;
    align-items: center;
    gap: 4px;
    padding: 6px 0;
    background: linear-gradient(#1b0f16 70%, #26141f);
}

.dock-item {
    width: 64px;
    height: 64px;
    flex: none;
    display: flex;
    align-items: center;
    justify-content: center;
    border-radius: 10px;
    position: relative;
}

.dock-active {
    background-color: #433a40;
}

.dock-active::before {
    content: '';
    position: absolute;
    left: 0;
    width: 6px;
    height: 6px;
    border-radius: 50%;
    background-color: #e95420;
}

.dock-line {
    width: 48px;
    height: 1px;
    flex: none;
    margin: -1px 0;
    background-color: #bbb;
}

.dock-apps {
    margin-top: auto;
    padding: 17px;
}

/* window */
.window {
    flex: 1;
    min-width: 0;
    display: flex;
    flex-direction: column;
    background-color: #fafafa;
}

.titlebar {
    height: 37px;
    flex: none;
    display: flex;
    align-items: center;
    padding: 0 7px 0 97px;
    background-color: #ebebeb;
    border-bottom: 1px solid #bcbcbc;
}

.title {
    flex: 1;
    text-align: center;
    font-size: 14px;
    font-weight: 700;
}

.window-buttons {
    display: flex;
    gap: 12px;
}

.window-buttons button {
    width: 22px;
    height: 22px;
    border-radius: 50%;
    background-color: #dadada;
    display: flex;
    align-items: center;
    justify-content: center;
}

.menubar {
    height: 25px;
    flex: none;
    display: flex;
}

.menus {
    flex: 1;
    display: flex;
    gap: 1px;
    padding-left: 1px;
    border-bottom: 1px solid #dcdcdc;
}

.menus button {
    padding: 0 8px;
}

.close-doc {
    width: 24px;
    padding-left: 3px;
}

/* toolbars */
.toolbar {
    height: 39px;
    flex: none;
    display: flex;
    align-items: center;
    padding: 0 0 1px 2px;
}

.toolbar-standard {
    padding-left: 3px;
}

.tool {
    width: 33px;
    height: 34px;
    flex: none;
    display: flex;
    align-items: center;
    justify-content: center;
    border-radius: 6px;
}

.tool svg,
.sidebar svg {
    width: 24px;
    height: 24px;
}

.tool-on {
    background-color: #d6d6d6;
    border: 1px solid #c2c2c2;
}

.drop {
    width: 11px;
    height: 34px;
    flex: none;
    display: flex;
    align-items: center;
    justify-content: center;
}

.drop::after {
    content: '';
    border: 3px solid transparent;
    border-top: 4px solid #000;
    border-bottom: 0;
}

.drop-off::after {
    border-top-color: #bbb;
}

.sep {
    width: 1px;
    height: 33px;
    flex: none;
    margin: 0 3px 0 4px;
    background-color: #dcdcdc;
}

.sep-tight {
    margin-left: 3px;
}

.combo {
    height: 34px;
    flex: none;
    display: flex;
    border: 1px solid #c2c2c2;
    border-radius: 6px;
    background-color: #fff;
    color: #000;
}

.combo input {
    flex: 1;
    min-width: 0;
    padding-left: 8px;
}

.combo button {
    width: 36px;
    flex: none;
    border-left: 1px solid #c2c2c2;
    display: flex;
    align-items: center;
    justify-content: center;
}

.combo-font {
    width: 221px;
    margin: 0 8px 0 2px;
    font-style: italic;
}

.combo-size {
    width: 101px;
}

.combo-name {
    width: 173px;
}

/* sheet area */
.workspace {
    flex: 1;
    min-height: 0;
    display: flex;
}

.sheet-area {
    flex: 1;
    min-width: 0;
    display: flex;
    flex-direction: column;
}

.formula-bar {
    height: 39px;
    flex: none;
    display: flex;
    align-items: center;
    padding: 0 0 1px 4px;
}

.formula-bar .sep {
    height: 25px;
}

.formula-bar .drop {
    margin: 0 3px;
}

.fx,
.fx svg {
    width: 22px;
    height: 22px;
    flex: none;
}

.formula {
    flex: 1;
    min-width: 0;
    height: 24px;
    margin-left: 2px;
    border: 1px solid #c2c2c2;
    background-color: #fff;
    padding-left: 6px;
}

.expand {
    width: 22px;
    padding-right: 4px;
    display: flex;
    justify-content: center;
}

.infobar {
    height: 40px;
    flex: none;
    display: flex;
    align-items: center;
    padding: 0 5px 0 3px;
    border: 1px solid #c2c2c2;
    background-color: #bde5f8;
    color: #000;
}

.infobar p {
    flex: 1;
    padding: 0 0 2px 7px;
}

.btn {
    height: 34px;
    padding: 0 17px 1px;
    border: 1px solid #c8c8c8;
    border-radius: 6px;
    background-color: #fff;
    color: #3d3d3d;
}

.btn-close {
    margin-left: 7px;
}

.grid-row {
    flex: 1;
    min-height: 0;
    display: flex;
}

.grid {
    flex: 1;
    min-width: 0;
    overflow: hidden;
    background-color: #fff;
}

.table {
    width: 1841px;
    table-layout: fixed;
    border-collapse: separate;
    border-spacing: 0;
}

.table th {
    width: 90px;
    height: 20px;
    line-height: 19px;
    font-size: 14px;
    font-weight: 400;
    background-color: #fafafa;
    border-right: 1px solid #999;
    border-bottom: 1px solid #999;
}

.table th:first-child {
    width: 41px;
}

.table th.head-on,
.table tbody th {
    background-color: #e95420;
    border-color: #c9481c;
    color: #fff;
    font-weight: 700;
}

.table tbody th {
    height: 18px;
    line-height: 17px;
}

.table td {
    border-right: 1px solid #bfbfbf;
    border-bottom: 1px solid #bfbfbf;
    font-family: 'DejaVu Sans', sans-serif;
    font-size: 15px;
    line-height: 17px;
    position: relative;
}

.table .tall th,
.table .tall td {
    height: 21px;
    line-height: 18px;
    vertical-align: bottom;
}

.table td.filled {
    border-color: #d3d3e0;
    color: #38445a;
}

.table td.selected {
    background-color: #fad3c8;
    border-right-color: #e95420;
    border-bottom-color: #dcb6b3;
    color: #5e4248;
    font-weight: 700;
    text-align: center;
}

.table td.active {
    border-bottom-color: #e95420;
    box-shadow: inset 1px 1px #e95420;
}

.cell {
    display: flex;
    overflow: hidden;
    white-space: nowrap;
    padding-left: 1px;
    height: 17px;
}

.cell-head {
    justify-content: center;
    font-weight: 700;
}

/* markers for text that does not fit the cell */
.cut-left::before,
.cut-right::after {
    content: '';
    position: absolute;
    top: 5px;
    border: 4px solid transparent;
}

.cut-left::before {
    left: 0;
    border-left: 0;
    border-right-color: #c00;
}

.cut-right::after {
    right: 0;
    border-right: 0;
    border-left-color: #500;
}

.marquee::before {
    content: '';
    position: absolute;
    inset: 0 -1px -1px;
    border: 1px dashed #000;
    border-top-color: #ccc;
}

.table td.underlined {
    border-bottom-color: #000;
}

.vscroll {
    width: 12px;
    flex: none;
    display: flex;
    flex-direction: column;
    align-items: center;
}

.vsplit {
    width: 12px;
    height: 5px;
    border: solid #b8b8b8;
    border-width: 2px 3px;
    background-color: #000;
}

.vthumb {
    width: 6px;
    height: 47%;
    margin-top: 5px;
    border-radius: 3px;
    background-color: #8a8a8a;
}

.hscroll {
    height: 12px;
    flex: none;
    display: flex;
    align-items: center;
    justify-content: space-between;
    padding: 0 12px 0 4px;
}

.hthumb {
    width: 47%;
    height: 6px;
    border-radius: 3px;
    background-color: #8a8a8a;
}

.hsplit {
    width: 5px;
    height: 12px;
    border: solid #b8b8b8;
    border-width: 3px 2px;
    background-color: #000;
}

.tabs {
    height: 25px;
    flex: none;
    display: flex;
    align-items: center;
    gap: 9px;
    padding-left: 10px;
}

.add-sheet {
    margin-left: 6px;
}

.tabs .tab {
    height: 25px;
    padding: 0 11px;
    margin-left: 1px;
    background-color: #fff;
    border-bottom: 3px solid #959595;
    font-weight: 600;
    font-size: 13px;
}

.sidebar {
    width: 59px;
    flex: none;
    border-left: 1px solid #b5b5b5;
    display: flex;
    flex-direction: column;
    align-items: center;
    gap: 8px;
    padding: 2px 0 0 1px;
    position: relative;
}

.sidebar button {
    width: 36px;
    height: 34px;
    flex: none;
    display: flex;
    align-items: center;
    justify-content: center;
    border-radius: 6px;
}

.sidebar .side-menu {
    margin-bottom: 3px;
}

.sidebar .side-on {
    background-color: #d6d6d6;
    border: 1px solid #c2c2c2;
}

.side-handle {
    position: absolute;
    left: 0;
    top: 409px;
    width: 6px;
    height: 73px;
    background-color: #b5b5b5;
}

.side-handle::after {
    content: '';
    position: absolute;
    top: 33px;
    left: 1px;
    border: 4px solid transparent;
    border-left-color: #fff;
    border-right: 0;
}

/* status bar */
.statusbar {
    height: 21px;
    flex: none;
    display: flex;
    align-items: center;
    padding-top: 1px;
    border-top: 1px solid #b5b5b5;
    font-size: 12px;
}

.statusbar > span {
    height: 14px;
    line-height: 14px;
    flex: none;
    padding-left: 8px;
    border-right: 1px solid #dcdcdc;
    white-space: nowrap;
}

.statusbar > .st-sheet {
    width: 252px;
    padding-left: 10px;
}

.statusbar > .st-selected {
    width: 385px;
}

.statusbar > .st-style {
    width: 228px;
    border-right: none;
}

.statusbar > .st-lang {
    flex: 1;
    text-align: center;
    padding-left: 0;
}

.statusbar > .st-icon {
    width: 29px;
    padding: 0;
    display: flex;
    justify-content: center;
}

.statusbar > .st-sum {
    width: 285px;
    text-align: center;
    padding-left: 0;
}

.statusbar > .st-zoom {
    width: 143px;
    display: flex;
    align-items: center;
    justify-content: center;
    gap: 5px;
    padding-left: 2px;
}

.statusbar > .st-percent {
    width: 48px;
    border-right: none;
}

.st-zoom input {
    appearance: none;
    width: 98px;
    height: 2px;
    background-color: #9a9a9a;
}

.st-zoom input::-webkit-slider-thumb {
    appearance: none;
    width: 8px;
    height: 9px;
    border: 1px solid #555;
    border-radius: 4px;
    background-color: #fff;
}

.pointer {
    position: absolute;
    left: 206px;
    top: 367px;
}
```

FILE: script.js
```js
const columns = 'ABCDEFGHIJKLMNOPQRS'.split('').concat('');
const headings = ['First Name', 'Order ID', 'Last Name', '', 'Sales'];
const rows = [
    ['Benedict', '76', 'Cucumberbatch', '9/11/2022', '2492'],
    ['Blake', '112', 'Twice', '###', '2492'],
    ['Rey', '3604', 'Shawarma', '1/17/2023', '2487'],
    ['Arnold', '36', 'Cheese', '2/6/2023', '2285'],
    ['Clint', '51', 'Eastwood', '8/6/2022', '1052'],
    ['Olivia', '912', 'Calm', '###', '1020'],
    ['Parah', '6540', 'Salin', '11/4/2022', '415'],
    ['Elijah', '6603', 'Plastic', '11/6/2022', '1069'],
    ['Tom', '36', 'Softy', '8/14/2022', '1669'],
    ['John', '730', 'Badman', '###', '549'],
    ['Kanye', '13500', 'East', '###', '1126'],
    ['Reese', '54', 'Withoutaspoon', '###', '4390'],
    ['Swan', '21540', 'Ronson', '8/22/2022', '4636'],
    ['50 Dollar', '2', 'Dollar', '1/1/2023', '3384'],
    ['Jonah', '11', 'Mountain', '###', '1967'],
    ['Jeff', '1', 'Tunnels', '###', '8903'],
    ['Keira', '897', 'Daily', '9/15/2022', '4730'],
    ['Morgan', '38', 'Prisoner', '###', '2011'],
    ['Emma', '288', 'Stoned', '###', '5538'],
    ['Leonardo', '17116', 'DiThario', '1/1/2023', '2414'],
    ['Tom', '4', 'Drive', '1/1/2023', '237'],
    ['Selena', '81', 'Stopmez', '1/21/2023', '1612']
];

const headClasses = ['cut-left cut-right', '', 'cut-left', 'marquee', 'underlined'];

document.getElementById('columnHeads').innerHTML = '<th></th>' + columns.map(name =>
    `<th class="${name === 'A' ? 'head-on' : ''}">${name}</th>`
).join('');

function headingCell(text, i) {
    return `<td class="filled ${headClasses[i]}"><div class="cell cell-head">${text}</div></td>`;
}

function dataCell(text) {
    const cut = text.length > 10 ? 'cut-right' : '';
    return `<td class="filled ${cut}"><div class="cell">${text}</div></td>`;
}

let html = '';
for (let n = 1; n <= 38; n++) {
    let cells = '';
    if (n === 1) {
        cells = headings.map(headingCell).join('');
    } else if (rows[n - 2]) {
        cells = rows[n - 2].map(dataCell).join('');
    }
    const used = cells ? 6 : 1;
    cells += '<td></td>'.repeat(columns.length - used);
    html += `<tr class="${n > 23 ? 'tall' : ''}"><th>${n}</th><td class="selected ${n === 1 ? 'active' : ''}">Date</td>${cells}</tr>`;
}
document.getElementById('sheetBody').innerHTML = html;
```
